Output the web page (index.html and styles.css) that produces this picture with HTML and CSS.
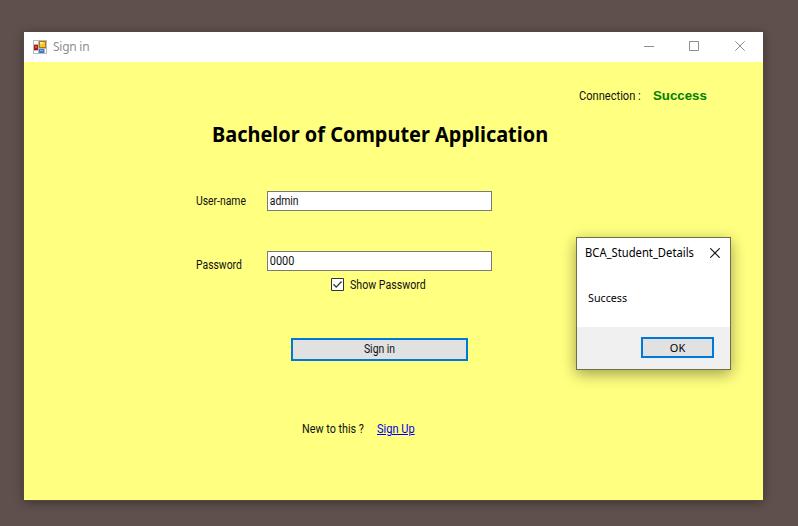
FILE: index.html
```html
<!DOCTYPE html>
<html lang="en">
<head>
<meta charset="utf-8">
<title>Sign in</title>
<link rel="stylesheet" href="styles.css">
</head>
<body>
<main class="window">
  <header class="titlebar">
    <svg class="app-icon" width="14" height="14" viewBox="0 0 14 14" shape-rendering="crispEdges">
      <path fill="#b9b9b9" d="M0 0h14v14H0z"/>
      <path fill="#fff" d="M1 1h4v3H1zM1 11h4v2H1zM12 9h1v4h-1z"/>
      <path fill="#a81c12" d="M1 5h4v5H1z"/><path fill="#e8483a" d="M2 6h2v2H2z"/>
      <path fill="#a87b0c" d="M6 1h7v7H6z"/><path fill="#f9c52f" d="M7 2h5v5H7z"/><path fill="#ffe88a" d="M7 2h3v2H7z"/>
      <path fill="#3f78d0" d="M6 9h5v4H6z"/><path fill="#86b4fa" d="M7 10h3v1H7z"/>
    </svg>
    <span class="window-title">Sign in</span>
    <svg class="window-controls" width="102" height="10" viewBox="0 0 102 10" fill="none" stroke="#8d8d8d">
      <path d="M0 5.500h10M45.500 .5h9v9h-9z"/><path d="M91.300 .3l9.400 9.400M100.700 .3l-9.400 9.400"/>
    </svg>
  </header>
  <form class="content">
    <div class="connection"><span class="narrow t-connection">Connection :</span><strong class="status">Success</strong></div>
    <h1 class="heading">Bachelor of Computer Application</h1>
    <div class="field user"><label class="narrow" for="user">User-name</label><div class="box"><input id="user" type="text" value="admin"></div></div>
    <div class="field password"><label class="narrow" for="pass">Password</label><div class="box digits"><input id="pass" type="text" value="0000"></div></div>
    <div class="show">
      <svg width="13" height="13" viewBox="0 0 13 13" fill="#fff" stroke="#333"><path d="M.5 .5h12v12H.5z"/><path fill="none" stroke-width="1.300" d="M2.500 6.300l2.700 2.800 5.300-5.600"/></svg>
      <span class="narrow t-show">Show Password</span>
    </div>
    <button class="sign-in" type="button"><span class="narrow t-signin">Sign in</span></button>
    <div class="signup"><span class="narrow t-new">New to this ?</span><a class="narrow t-signup" href="#">Sign Up</a></div>
  </form>
</main>
<section class="dialog">
  <header class="dialog-head"><span class="narrow t-dialog">BCA_Student_Details</span>
    <svg width="10" height="10" viewBox="0 0 10 10" fill="none" stroke="#111" stroke-width="1.100"><path d="M.3 .3l9.400 9.400M9.700 .3L.3 9.700"/></svg>
  </header>
  <p class="message"><span class="narrow t-message">Success</span></p>
  <footer class="dialog-foot"><button class="ok" type="button">OK</button></footer>
</section>
</body>
</html>
```
FILE: styles.css
```css
* { box-sizing: border-box; }
body {
  margin: 0;
  height: 526px;
  padding: 32px 35px 26px 24px;
  overflow: hidden;
  background: #5f504d;
  font: 12px/20px Roboto, "Liberation Sans", sans-serif;
  color: #111;
}
span, strong, a, label { white-space: nowrap; }
svg { display: block; flex: none; }
.narrow { display: inline-block; transform: scaleX(.865); transform-origin: 0 50%; }
.window {
  width: 739px;
  height: 468px;
  background: #ffff80;
  box-shadow: 0 0 0 1px #554842, 0 2px 10px rgba(0, 0, 0, .4);
}
.titlebar {
  display: flex;
  align-items: center;
  height: 30px;
  padding: 0 17px 0 9px;
  background: #fff;
}
.app-icon { margin-top: -1px; }
.window-title {
  margin-left: 6px;
  font: 12px/20px "Noto Sans", sans-serif;
  letter-spacing: -.25px;
  color: #8f8f8f;
}
.window-controls { margin: -2px 0 0 auto; }
.content { padding-top: 24px; }
.connection { display: flex; height: 20px; padding-left: 555px; }
.t-connection { width: 74px; transform: scaleX(.925); }
.status {
  font: bold 12.500px/20px "Liberation Sans", sans-serif;
  color: #008000;
  transform: scaleX(1.060);
  transform-origin: 0 50%;
}
.heading {
  height: 30px;
  margin: 14px 0 0 188px;
  font: bold 21px/29px "Noto Sans", sans-serif;
  color: #000;
  transform: scaleX(.949);
  transform-origin: 0 50%;
}
.field { display: flex; height: 20px; padding-left: 172px; }
.field label { width: 71px; }
.box { width: 225px; height: 20px; border: 1px solid #7a7a7a; background: #fff; }
.box input {
  display: block;
  width: 250px;
  height: 18px;
  padding: 0 2px;
  border: 0;
  background: transparent;
  font: 12px/18px Roboto, sans-serif;
  color: #111;
  transform: scaleX(.865);
  transform-origin: 0 50%;
}
.digits input { width: 238px; transform: scaleX(.91); }
.user { margin-top: 41px; }
.password { margin-top: 40px; }
.password label { padding-top: 4px; }
.show { display: flex; align-items: center; gap: 6px; height: 13px; margin: 7px 0 0 307px; }
.t-show { transform: scaleX(.885); }
.sign-in {
  display: block;
  width: 177px;
  height: 23px;
  margin: 47px 0 0 267px;
  padding: 0;
  border: 2px solid #0078d7;
  background: #e1e1e1;
  font: 12px/19px Roboto, sans-serif;
  color: #111;
}
.t-signin { transform-origin: 40% 50%; }
.signup { display: flex; margin: 58px 0 0 278px; }
.t-new { width: 75px; transform: scaleX(.9); }
.signup a { color: #0000f0; transform: scaleX(.92); }
.dialog {
  position: absolute;
  left: 576px;
  top: 237px;
  width: 155px;
  height: 133px;
  border: 1px solid #707047;
  background: #fff;
  box-shadow: 0 4px 14px rgba(0, 0, 0, .38);
  font: 12px/20px "Noto Sans", sans-serif;
  color: #000;
}
.dialog-head { display: flex; align-items: center; justify-content: space-between; height: 29px; padding: 0 10px 0 8px; }
.t-dialog { transform: scaleX(.935); }
.message { margin: 0; height: 60px; padding: 21px 0 0 11px; font-size: 11px; }
.t-message { transform: scaleX(.975); }
.dialog-foot { display: flex; justify-content: flex-end; height: 42px; padding: 10px 16px; background: #f0f0f0; }
.ok {
  width: 73px;
  height: 21px;
  padding: 0;
  border: 2px solid #0078d7;
  background: #e1e1e1;
  font: 11px/17px "Noto Sans", sans-serif;
  color: #000;
}
```
